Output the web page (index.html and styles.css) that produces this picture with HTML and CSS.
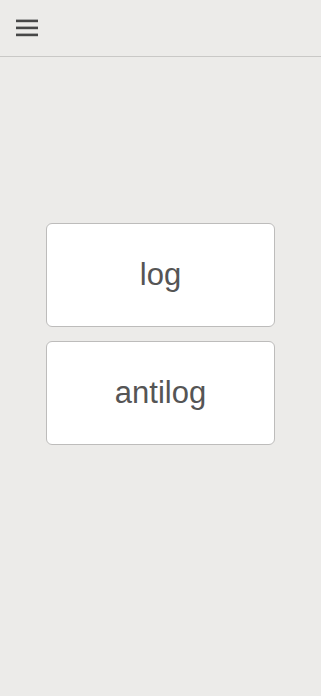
FILE: index.html
```html
<!DOCTYPE html>
<html>
<head>
<meta charset="utf-8">
<link rel="stylesheet" href="styles.css">
</head>
<body>
<header class="topbar">
  <button class="menu" aria-label="menu">
    <svg width="22" height="56" viewBox="0 0 22 56"><rect x="0" y="19.6" width="22" height="2.6" fill="#474747"/><rect x="0" y="26.6" width="22" height="2.6" fill="#474747"/><rect x="0" y="33.6" width="22" height="2.6" fill="#474747"/></svg>
  </button>
</header>
<main class="content">
  <div class="btn">log</div>
  <div class="btn">antilog</div>
</main>
</body>
</html>
```
FILE: styles.css
```css
html, body { margin: 0; padding: 0; }
body {
  background: #ecebe9;
  font-family: "Liberation Sans", Arial, sans-serif;
  width: 321px;
  height: 696px;
  overflow: hidden;
}
.topbar {
  box-sizing: border-box;
  height: 57px;
  border-bottom: 1px solid #c9c8c6;
  display: flex;
  align-items: flex-start;
  padding-left: 16px;
}
.menu {
  border: 0;
  background: none;
  padding: 0;
  display: flex;
}
.content {
  display: flex;
  flex-direction: column;
  align-items: center;
  gap: 14px;
  padding-top: 166px;
}
.btn {
  box-sizing: border-box;
  width: 229px;
  height: 104px;
  background: #fff;
  border: 1px solid #bdbcbb;
  border-radius: 6px;
  display: flex;
  align-items: center;
  justify-content: center;
  font-size: 31px;
  color: #555555;
}
```
